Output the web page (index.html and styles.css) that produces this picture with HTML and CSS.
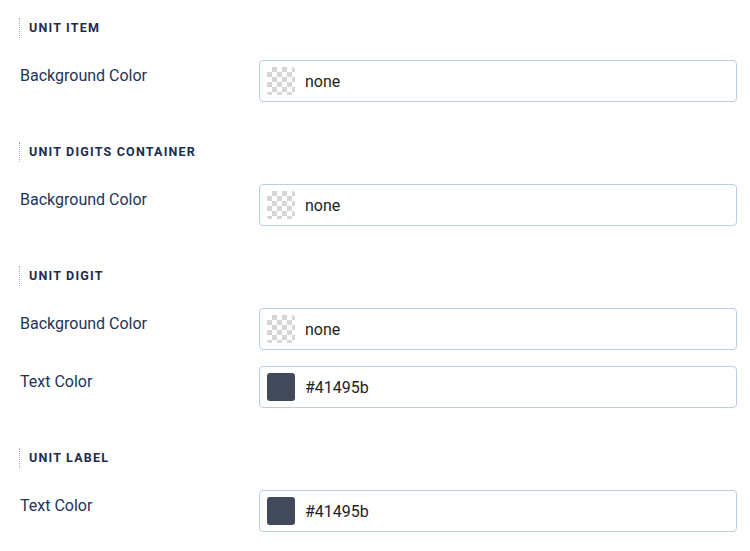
FILE: index.html
```html
<!DOCTYPE html>
<html lang="en">
<head>
    <meta charset="UTF-8">
    <meta name="viewport" content="width=device-width, initial-scale=1.0">
    <title>Unit Styles</title>
    <link rel="stylesheet" href="styles.css">
</head>
<body>
    <div class="section">
        <div class="section-title">Unit Item</div>
        <div class="field">
            <div class="label">Background Color</div>
            <div class="color-input">
                <span class="swatch swatch-none"></span>
                <span class="value">none</span>
            </div>
        </div>
    </div>

    <div class="section">
        <div class="section-title">Unit Digits Container</div>
        <div class="field">
            <div class="label">Background Color</div>
            <div class="color-input">
                <span class="swatch swatch-none"></span>
                <span class="value">none</span>
            </div>
        </div>
    </div>

    <div class="section">
        <div class="section-title">Unit Digit</div>
        <div class="field">
            <div class="label">Background Color</div>
            <div class="color-input">
                <span class="swatch swatch-none"></span>
                <span class="value">none</span>
            </div>
        </div>
        <div class="field">
            <div class="label">Text Color</div>
            <div class="color-input">
                <span class="swatch swatch-slate"></span>
                <span class="value">#41495b</span>
            </div>
        </div>
    </div>

    <div class="section">
        <div class="section-title">Unit Label</div>
        <div class="field">
            <div class="label">Text Color</div>
            <div class="color-input">
                <span class="swatch swatch-slate"></span>
                <span class="value">#41495b</span>
            </div>
        </div>
    </div>
</body>
</html>
```

FILE: styles.css
```css
body {
    font-family: Roboto, "Liberation Sans", Arial, sans-serif;
    background: #ffffff;
    margin: 0;
    padding: 18px 13px 0 19px;
}
.section {
    display: flex;
    flex-direction: column;
    gap: 16px;
    margin-bottom: 40px;
}
.section-title {
    height: 20px;
    line-height: 20px;
    padding-left: 9px;
    border-left: 1px dotted #a9a9a9;
    margin-bottom: 6px;
    font-size: 12.5px;
    font-weight: 700;
    letter-spacing: 1.2px;
    text-transform: uppercase;
    color: #1b2c4d;
}
.field {
    display: flex;
    align-items: flex-start;
}
.label {
    width: 239px;
    padding: 5px 0 0 1px;
    font-size: 16px;
    line-height: 21px;
    color: #23345a;
}
.color-input {
    flex: 1;
    display: flex;
    align-items: center;
    gap: 10px;
    height: 28px;
    padding: 6px 7px;
    border: 1px solid #bfcde3;
    border-radius: 4px;
}
.swatch {
    width: 28px;
    height: 28px;
    border-radius: 3px;
}
.swatch-none {
    background-color: #ffffff;
    background-image:
        linear-gradient(45deg, #d6d6d6 25%, transparent 25%, transparent 75%, #d6d6d6 75%),
        linear-gradient(45deg, #d6d6d6 25%, transparent 25%, transparent 75%, #d6d6d6 75%);
    background-size: 10px 10px;
    background-position: 0 0, 5px 5px;
}
.swatch-slate {
    background: #41495b;
}
.value {
    font-size: 16px;
    color: #1e1e1e;
}
```
